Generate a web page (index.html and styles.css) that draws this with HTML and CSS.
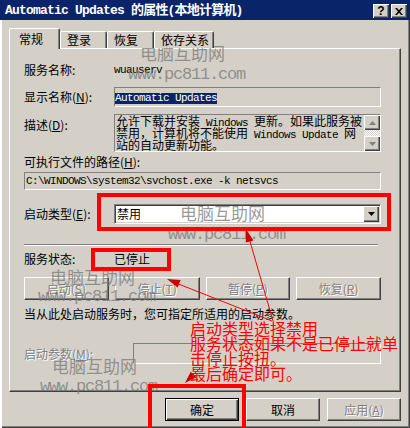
FILE: index.html
```html
<!DOCTYPE html>
<html lang="zh-CN">
<head>
    <meta charset="UTF-8">
    <meta name="viewport" content="width=device-width, initial-scale=1.0">
    <title>Automatic Updates 的属性(本地计算机)</title>
    <link rel="stylesheet" href="styles.css">
</head>
<body>

    <div class="window">

        <div class="titlebar">
            <span class="title">Automatic Updates 的属性(本地计算机)</span>
            <div class="caption-btns">
                <span class="cbtn">?</span>
                <span class="cbtn">
                    <svg width="8" height="7" viewBox="0 0 8 7"><path d="M0 0h2l2 2.2L6 0h2L5 3.5 8 7H6L4 4.8 2 7H0l3-3.5z" fill="#000"/></svg>
                </span>
            </div>
        </div>

        <div class="client">

            <div class="tabs">
                <div class="tab active t1">常规</div>
                <div class="tab t2">登录</div>
                <div class="tab t3">恢复</div>
                <div class="tab t4">依存关系</div>
            </div>

            <div class="panel">
                <div class="row r-name">
                    <span class="lbl">服务名称:</span>
                    <span class="en">wuauserv</span>
                </div>

                <div class="row r-display">
                    <span class="lbl">显示名称(<u>N</u>):</span>
                    <div class="edit display"><span class="sel en">Automatic Updates</span></div>
                </div>

                <div class="row r-desc">
                    <span class="lbl">描述(<u>D</u>):</span>
                    <div class="edit desc">
                        <div class="desc-text">
                            <div class="dline">允许下载并安装<span class="en"> Windows </span>更新。如果此服务被</div>
                            <div class="dline">禁用，计算机将不能使用<span class="en"> Windows Update </span>网</div>
                            <div class="dline">站的自动更新功能。</div>
                        </div>
                        <div class="vscroll">
                            <span class="sbtn"><svg width="7" height="4" viewBox="0 0 7 4"><polygon points="3.5,0 7,4 0,4" fill="#808080"/></svg></span>
                            <span class="track"></span>
                            <span class="sbtn"><svg width="7" height="4" viewBox="0 0 7 4"><polygon points="0,0 7,0 3.5,4" fill="#808080"/></svg></span>
                        </div>
                    </div>
                </div>

                <div class="row r-pathlbl">可执行文件的路径(<u>H</u>):</div>
                <div class="edit path en">C:\WINDOWS\system32\svchost.exe -k netsvcs</div>

                <div class="row r-startup">
                    <span class="lbl">启动类型(<u>E</u>):</span>
                    <div class="combo">
                        <span class="combo-text">禁用</span>
                        <span class="drop"><svg width="7" height="4" viewBox="0 0 7 4"><polygon points="0,0 7,0 3.5,4" fill="#000"/></svg></span>
                    </div>
                </div>

                <div class="sep"></div>

                <div class="row r-status">
                    <span class="lbl">服务状态:</span>
                    <span>已停止</span>
                </div>

                <div class="svc-btns">
                    <button class="btn" disabled>启动(<u>S</u>)</button>
                    <button class="btn" disabled>停止(<u>T</u>)</button>
                    <button class="btn" disabled>暂停(<u>P</u>)</button>
                    <button class="btn" disabled>恢复(<u>R</u>)</button>
                </div>

                <p class="hint">当从此处启动服务时，您可指定所适用的启动参数。</p>

                <div class="row r-params">
                    <span class="lbl wide dis">启动参数(<u>M</u>):</span>
                    <div class="edit params"></div>
                </div>
            </div>

            <div class="dlg-btns">
                <button class="btn default">确定</button>
                <button class="btn">取消</button>
                <button class="btn" disabled>应用(<u>A</u>)</button>
            </div>
        </div>

        <!-- site watermarks and red annotations drawn over the dialog -->
        <div class="overlay">
            <span class="wm wm1">电脑互助网</span>
            <span class="url u1">www.pc811.com</span>
            <span class="wm wm2">电脑互助网</span>
            <span class="url u2">www.pc811.com</span>
            <span class="wm wm3">电脑互助网</span>
            <span class="url u3">www.pc811.com</span>
            <span class="wm wm4">电脑互助网</span>
            <span class="url u4">www.pc811.com</span>

            <svg class="marks" width="410" height="428" viewBox="0 0 410 428">
                <rect x="99" y="195" width="290" height="34" fill="none" stroke="#f00" stroke-width="4"/>
                <rect x="93" y="250" width="76" height="19" fill="none" stroke="#f00" stroke-width="4"/>
                <rect x="150" y="386" width="94" height="50" fill="none" stroke="#f00" stroke-width="4"/>

                <line x1="273" y1="321" x2="249" y2="238" stroke="#f00" stroke-width="1"/>
                <polygon points="246,229 253.5,240.4 245.8,242.6" fill="#c00"/>

                <line x1="272" y1="321" x2="176" y2="283" stroke="#f00" stroke-width="1"/>
                <polygon points="167,279 180.6,280.1 177.6,287.5" fill="#c00"/>

                <line x1="200" y1="368" x2="191" y2="377" stroke="#f00" stroke-width="1"/>
                <polygon points="185,383 196.3,377.3 190.7,371.7" fill="#c00"/>
            </svg>

            <div class="note">启动类型选择禁用<br>服务状态如果不是已停止就单<br>击停止按扭。<br>最后确定即可。</div>
        </div>
    </div>

</body>
</html>
```

FILE: styles.css
```css
* {
    box-sizing: border-box;
}

body {
    margin: 0;
    background: #D4D0C8;
    font-family: "Noto Sans CJK SC", sans-serif;
    font-size: 12px;
    line-height: 14px;
    color: #000;
}

.window {
    position: relative;
    width: 410px;
    height: 428px;
    overflow: hidden;
    background: #D4D0C8;
    box-shadow: inset 2px 0 #fff, inset -1px -1px #404040, inset -2px -2px #808080;
}

/* title bar */
.titlebar {
    display: flex;
    align-items: flex-start;
    justify-content: space-between;
    height: 20px;
    padding: 4px 3px 0 5px;
    background: #0A246A;
    color: #fff;
}

.title {
    font-family: "Liberation Mono", "Noto Sans CJK SC", monospace;
    font-size: 13px;
    font-weight: bold;
    line-height: 14px;
    letter-spacing: -0.8px;
    white-space: nowrap;
}

.caption-btns {
    display: flex;
    gap: 2px;
}

.cbtn {
    display: flex;
    align-items: center;
    justify-content: center;
    width: 16px;
    height: 14px;
    background: #D4D0C8;
    color: #000;
    box-shadow: inset 1px 1px #fff, inset -1px -1px #404040, inset -2px -2px #808080;
    font-family: "Liberation Sans", sans-serif;
    font-size: 12px;
    font-weight: bold;
}

/* tabs */
.client {
    padding: 8px 9px 0 9px;
}

.tabs {
    position: relative;
    z-index: 1;
    display: flex;
    align-items: flex-end;
    height: 20px;
}

.tab {
    height: 17px;
    padding-left: 6px;
    line-height: 16px;
    background: #D4D0C8;
    border-top: 1px solid #fff;
    border-left: 1px solid #fff;
    border-right: 1px solid #404040;
    border-radius: 2px 2px 0 0;
    box-shadow: inset -1px 0 #808080;
    white-space: nowrap;
}

.tab.active {
    height: 21px;
    margin-bottom: -1px;
    padding-left: 9px;
    line-height: 19px;
}

.t1 { width: 51px; }
.t2 { width: 47px; }
.t3 { width: 47px; }
.t4 { width: 60px; }

/* property page */
.panel {
    height: 344px;
    padding: 0 19px 0 14px;
    border: 1px solid;
    border-color: #fff #404040 #404040 #fff;
    box-shadow: inset -1px -1px #808080;
}

.row {
    display: flex;
    align-items: center;
}

.lbl {
    flex: none;
    width: 90px;
    white-space: nowrap;
}

.lbl.wide {
    width: 109px;
}

.dis,
.btn:disabled {
    color: #808080;
    text-shadow: 1px 1px 0 #fff;
}

.en {
    font-family: "Liberation Mono", monospace;
    font-size: 11px;
    letter-spacing: -0.6px;
    white-space: pre;
}

.r-name { margin-top: 11px; height: 20px; }
.r-display { margin-top: 7px; height: 20px; }
.r-desc { margin-top: 7px; height: 38px; align-items: flex-start; }
.r-desc .lbl { padding-top: 4px; }
.r-pathlbl { margin-top: 3px; height: 14px; }
.r-startup { margin-top: 14px; height: 20px; }
.r-status { margin-top: 6px; height: 14px; }
.r-params { margin-top: 22px; height: 21px; }

.edit {
    flex: 1;
    height: 100%;
    background: #D4D0C8;
    border: 1px solid;
    border-color: #808080 #fff #fff #808080;
    overflow: hidden;
}

.display {
    padding: 1px 0 0 0;
}

.sel {
    display: inline-block;
    height: 11px;
    line-height: 11px;
    background: #0A246A;
    color: #fff;
}

.desc {
    display: flex;
}

.desc-text {
    flex: 1;
    padding-left: 1px;
}

.dline {
    height: 12px;
    line-height: 12px;
    white-space: nowrap;
}

.vscroll {
    display: flex;
    flex-direction: column;
    width: 16px;
    flex: none;
}

.sbtn {
    display: flex;
    align-items: center;
    justify-content: center;
    height: 15px;
    background: #D4D0C8;
    box-shadow: inset 1px 1px #fff, inset -1px -1px #404040, inset -2px -2px #808080;
}

.track {
    flex: 1;
    background-image: repeating-conic-gradient(#fff 0 25%, #D4D0C8 0 50%);
    background-size: 2px 2px;
}

.path {
    margin-top: 3px;
    height: 18px;
    padding-left: 1px;
    line-height: 16px;
}

.combo {
    display: flex;
    align-items: center;
    flex: 1;
    height: 100%;
    background: #fff;
    border: 1px solid;
    border-color: #808080 #fff #fff #808080;
    box-shadow: inset 1px 1px #404040, inset -1px -1px #D4D0C8;
}

.combo-text {
    flex: 1;
    padding-left: 2px;
}

.drop {
    display: flex;
    align-items: center;
    justify-content: center;
    width: 16px;
    height: 16px;
    margin-right: 1px;
    background: #D4D0C8;
    box-shadow: inset 1px 1px #fff, inset -1px -1px #404040, inset -2px -2px #808080;
}

.sep {
    margin: 20px 3px 0 0;
    height: 2px;
    border-top: 1px solid #808080;
    border-bottom: 1px solid #fff;
}

.svc-btns {
    display: grid;
    grid-template-columns: repeat(4, 1fr);
    gap: 6px;
    margin-top: 11px;
}

.btn {
    height: 23px;
    padding: 0;
    font-family: inherit;
    font-size: 12px;
    color: #000;
    background: #D4D0C8;
    border: 1px solid;
    border-color: #fff #404040 #404040 #fff;
    box-shadow: inset -1px -1px #808080;
}

.btn.default {
    border-color: #000;
    box-shadow: inset 1px 1px #fff, inset -1px -1px #404040, inset -2px -2px #808080;
}

.hint {
    margin: 7px 0 0 0;
    height: 14px;
}

.params {
    flex: 1;
}

.dlg-btns {
    display: flex;
    justify-content: flex-end;
    gap: 7px;
    margin-top: 6px;
}

.dlg-btns .btn {
    width: 74px;
}

/* overlay: watermarks and annotations */
.overlay {
    position: absolute;
    inset: 0;
    pointer-events: none;
}

.marks {
    position: absolute;
    top: 0;
    left: 0;
}

.wm,
.url {
    position: absolute;
    color: rgba(120, 120, 120, 0.75);
    white-space: nowrap;
}

.wm {
    font-size: 17px;
    line-height: 17px;
}

.url {
    font-family: "Liberation Mono", monospace;
    font-size: 17px;
    line-height: 17px;
    letter-spacing: -1.2px;
}

.wm1 { left: 140px; top: 44px; }
.u1 { left: 128px; top: 66px; }
.wm2 { left: 180px; top: 204px; }
.u2 { left: 168px; top: 226px; }
.wm3 { left: 50px; top: 268px; }
.u3 { left: 38px; top: 288px; }
.wm4 { left: 52px; top: 357px; }
.u4 { left: 40px; top: 378px; }

.note {
    position: absolute;
    left: 190px;
    top: 321px;
    color: #f00;
    font-size: 16px;
    line-height: 15px;
    white-space: nowrap;
}
```
